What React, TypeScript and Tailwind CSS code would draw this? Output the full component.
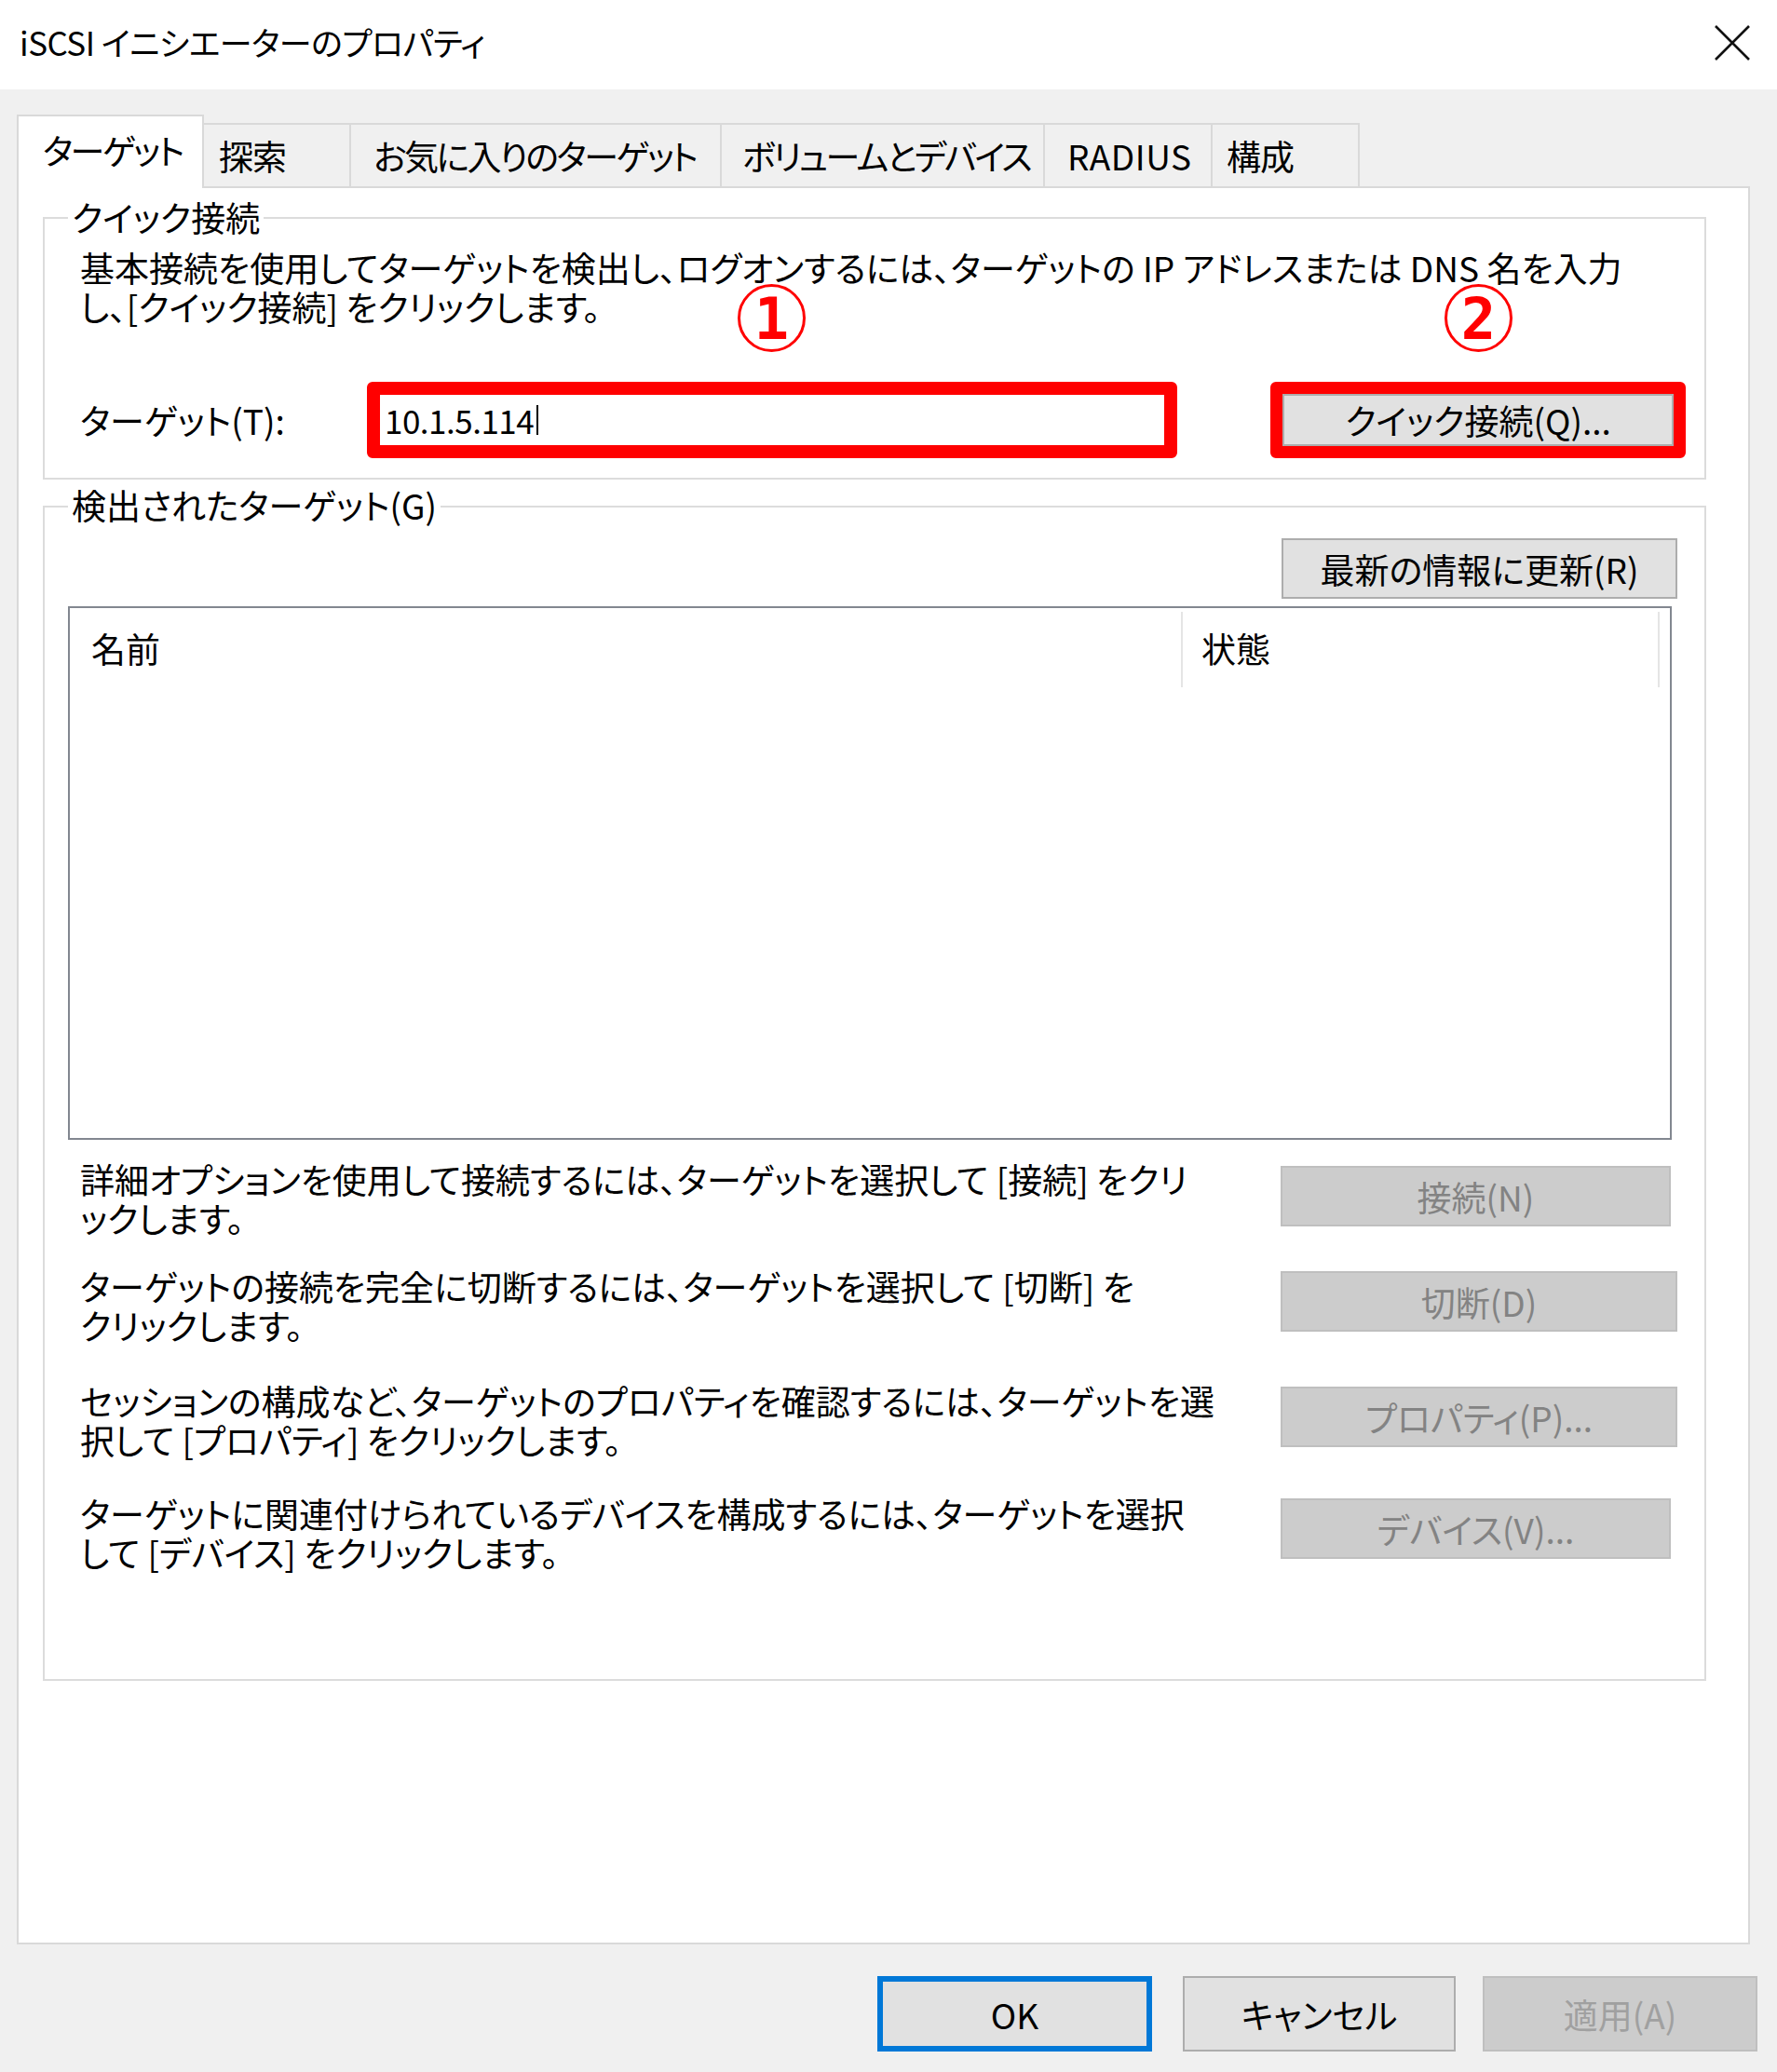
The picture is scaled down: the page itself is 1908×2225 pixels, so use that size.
import React from "react";

function Tab({ className, children }: { className: string; children: React.ReactNode }) {
  return (
    <div
      className={
        "h-[68px] bg-[#f0f0f0] border-2 border-l-0 border-b-0 border-[#d9d9d9] flex items-center whitespace-nowrap " +
        className
      }
    >
      {children}
    </div>
  );
}

function Circled({ className, n }: { className: string; n: string }) {
  return (
    <div
      className={
        "absolute w-[73px] h-[73px] rounded-full border-[3px] border-[#ff0000] flex items-center justify-center text-[#ff0000] font-['DejaVu_Sans_Mono',monospace] font-bold text-[62px] leading-none tracking-normal " +
        className
      }
    >
      <span className="mt-[2px]">{n}</span>
    </div>
  );
}

function DisabledButton({ className, children }: { className: string; children: React.ReactNode }) {
  return (
    <div
      className={
        "h-[65px] bg-[#cccccc] border-2 border-[#bfbfbf] text-[#838383] flex items-center justify-center whitespace-nowrap shrink-0 " +
        className
      }
    >
      {children}
    </div>
  );
}

function Lines({ lines }: { lines: string[] }) {
  return (
    <div className="flex flex-col">
      {lines.map((l, i) => (
        <div key={i} className="h-[42px] leading-[42px] whitespace-nowrap">
          {l}
        </div>
      ))}
    </div>
  );
}

export default function App() {
  return (
    <div className="w-[1908px] h-[2225px] bg-[#f0f0f0] flex flex-col font-['Noto_Sans_CJK_JP',sans-serif] [font-feature-settings:'palt'] text-[37px] leading-[42px] text-black overflow-hidden">
      {/* title bar */}
      <div className="h-[96px] shrink-0 bg-white flex items-center justify-between pl-[21px] pr-[28px]">
        <span className="pb-[6px] whitespace-nowrap text-[35px] tracking-[-0.5px]">iSCSI イニシエーターのプロパティ</span>
        <svg width="40" height="40" viewBox="0 0 40 40" className="mb-[4px]">
          <path d="M2 2 L38 38 M38 2 L2 38" stroke="#111" strokeWidth="2.6" fill="none" />
        </svg>
      </div>

      {/* body */}
      <div className="flex-1 flex flex-col pl-[18px] pr-[29px] pt-[27px]">
        {/* tabs */}
        <div className="h-[77px] shrink-0 flex items-end relative z-10">
          <div className="h-[79px] mb-[-2px] w-[201px] bg-white border-2 border-b-0 border-[#d9d9d9] flex items-center pl-[26px] pb-[6px] whitespace-nowrap tracking-[-2.5px]">
            ターゲット
          </div>
          <Tab className="w-[158px] pl-[16px] tracking-[-1px]">探索</Tab>
          <Tab className="w-[398px] pl-[24px] tracking-[-2.5px]">お気に入りのターゲット</Tab>
          <Tab className="w-[347px] pl-[22px] tracking-[-2.5px]">ボリュームとデバイス</Tab>
          <Tab className="w-[180px] pl-[24px] tracking-[0.5px]">RADIUS</Tab>
          <Tab className="w-[158px] pl-[15px] tracking-[-1px]">構成</Tab>
        </div>

        {/* panel */}
        <div className="flex-1 bg-white border-2 border-[#d9d9d9] flex flex-col">
          {/* quick connect group */}
          <div className="mt-[31px] ml-[26px] mr-[45px] relative border-2 border-[#dcdcdc] pt-[31px] pl-[38px] pb-[21px]">
            <span className="absolute top-[-23px] left-[25px] px-[4px] bg-white whitespace-nowrap">クイック接続</span>
            <Lines
              lines={[
                "基本接続を使用してターゲットを検出し、ログオンするには、ターゲットの IP アドレスまたは DNS 名を入力",
                "し、[クイック接続] をクリックします。",
              ]}
            />
            <div className="mt-[60px] h-[82px] flex items-center">
              <span className="w-[308px] shrink-0 whitespace-nowrap">ターゲット(T):</span>
              <div className="w-[870px] h-[82px] shrink-0 border-[14px] border-[#ff0000] rounded-[6px] bg-white flex items-center pl-[5px]">
                <span className="text-[35px] tracking-[-0.5px]">10.1.5.114</span>
                <span className="ml-[3px] w-[2px] h-[32px] bg-black" />
              </div>
              <div className="ml-[100px] w-[446px] h-[82px] shrink-0 border-[13px] border-[#ff0000] rounded-[6px] bg-[#ff0000]">
                <div className="w-full h-full bg-[#e1e1e1] border-2 border-[#adadad] flex items-center justify-center whitespace-nowrap">
                  クイック接続(Q)...
                </div>
              </div>
            </div>
            <Circled className="left-[744px] top-[70px]" n="1" />
            <Circled className="left-[1503px] top-[70px]" n="2" />
          </div>

          {/* discovered targets group */}
          <div className="mt-[28px] ml-[26px] mr-[45px] h-[1262px] relative border-2 border-[#dcdcdc] flex flex-col">
            <span className="absolute top-[-24px] left-[25px] px-[4px] bg-white whitespace-nowrap">検出されたターゲット(G)</span>
            <div className="pt-[33px] pr-[29px] flex justify-end">
              <div className="w-[425px] h-[65px] bg-[#e1e1e1] border-2 border-[#adadad] flex items-center justify-center whitespace-nowrap">
                最新の情報に更新(R)
              </div>
            </div>
            <div className="mt-[8px] ml-[25px] mr-[35px] h-[573px] border-2 border-[#828790] bg-white">
              <div className="h-[85px] flex">
                <div className="w-[1195px] mt-[4px] border-r-2 border-[#e5e5e5] pl-[23px] pt-[18px]">名前</div>
                <div className="w-[512px] mt-[4px] border-r-2 border-[#e5e5e5] pl-[20px] pt-[18px]">状態</div>
              </div>
            </div>

            <div className="mt-[21px] pl-[38px] pr-[29px] flex flex-col">
              <div className="flex justify-between items-start">
                <Lines
                  lines={[
                    "詳細オプションを使用して接続するには、ターゲットを選択して [接続] をクリ",
                    "ックします。",
                  ]}
                />
                <DisabledButton className="mt-[7px] w-[419px] mr-[7px]">接続(N)</DisabledButton>
              </div>
              <div className="mt-[31px] flex justify-between items-start">
                <Lines
                  lines={[
                    "ターゲットの接続を完全に切断するには、ターゲットを選択して [切断] を",
                    "クリックします。",
                  ]}
                />
                <DisabledButton className="mt-[5px] w-[426px]">切断(D)</DisabledButton>
              </div>
              <div className="mt-[39px] flex justify-between items-start">
                <Lines
                  lines={[
                    "セッションの構成など、ターゲットのプロパティを確認するには、ターゲットを選",
                    "択して [プロパティ] をクリックします。",
                  ]}
                />
                <DisabledButton className="mt-[6px] w-[426px]">プロパティ(P)...</DisabledButton>
              </div>
              <div className="mt-[37px] flex justify-between items-start">
                <Lines
                  lines={[
                    "ターゲットに関連付けられているデバイスを構成するには、ターゲットを選択",
                    "して [デバイス] をクリックします。",
                  ]}
                />
                <DisabledButton className="mt-[5px] w-[419px] mr-[7px]">デバイス(V)...</DisabledButton>
              </div>
            </div>
          </div>
        </div>
      </div>

      {/* footer */}
      <div className="h-[137px] shrink-0 flex justify-end items-start pt-[34px] pr-[21px]">
        <div className="w-[295px] h-[81px] border-[6px] border-[#0078d7] bg-[#e1e1e1] flex items-center justify-center">
          OK
        </div>
        <div className="ml-[33px] w-[293px] h-[81px] border-2 border-[#adadad] bg-[#e1e1e1] flex items-center justify-center whitespace-nowrap">
          キャンセル
        </div>
        <div className="ml-[29px] w-[295px] h-[81px] border-2 border-[#bfbfbf] bg-[#cccccc] text-[#a0a0a0] flex items-center justify-center whitespace-nowrap">
          適用(A)
        </div>
      </div>
    </div>
  );
}
